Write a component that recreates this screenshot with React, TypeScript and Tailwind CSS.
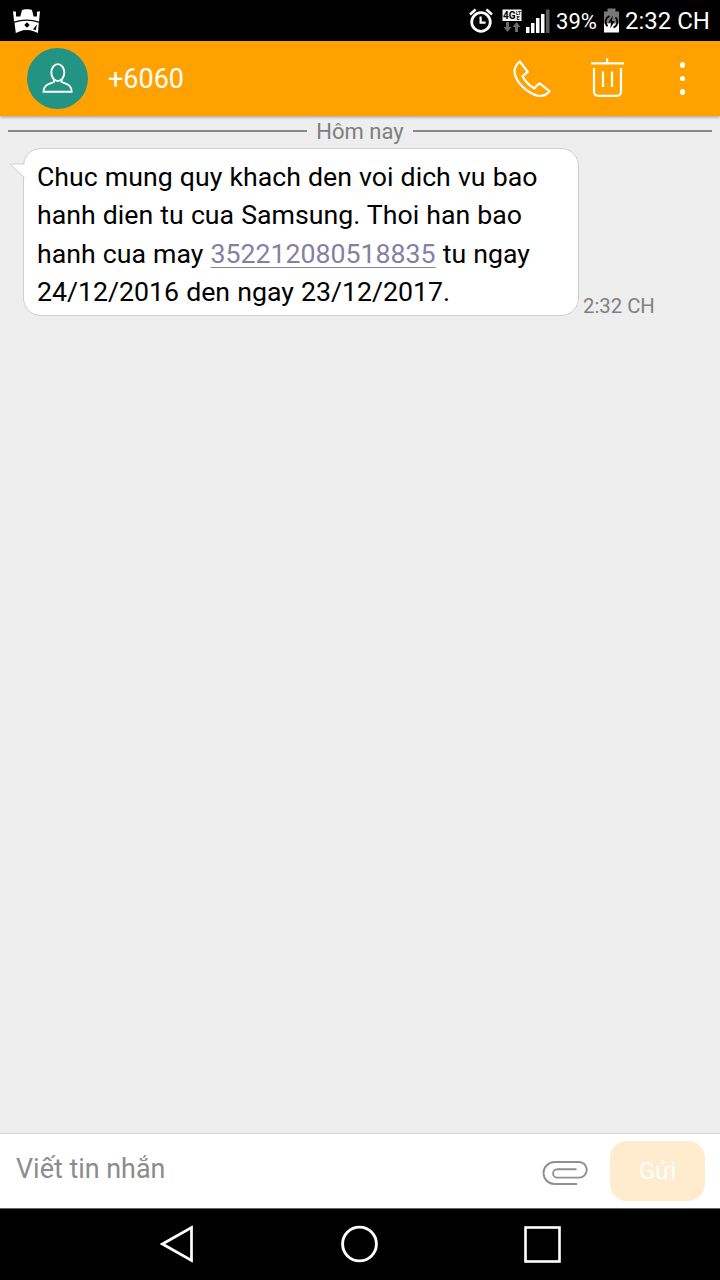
import React, { useState } from 'react';

const AlarmIcon = () => (
  <svg width="24" height="26" viewBox="0 0 24 26" fill="none" stroke="#fff">
    <circle cx="12" cy="14" r="9.3" strokeWidth="2.8" />
    <path d="M11.6 8.5v6.2h5" strokeWidth="2.2" />
    <path d="M1 6.4 6.6 1.6M23 6.4 17.4 1.6" strokeWidth="2.6" />
  </svg>
);

const NetworkIcon = () => (
  <svg width="20" height="24" viewBox="0 0 20 24">
    <rect x="0.5" y="0.5" width="19" height="11.5" fill="#f5f5f5" />
    <text x="1" y="10" fontSize="10.5" fontWeight="bold" textLength="12.5" lengthAdjust="spacingAndGlyphs" fontFamily="Roboto, sans-serif" fill="#000">4G</text>
    <text x="14" y="6" fontSize="5.5" fontWeight="bold" textLength="5" lengthAdjust="spacingAndGlyphs" fontFamily="Roboto, sans-serif" fill="#000">LT</text>
    <text x="14.5" y="10.8" fontSize="5.5" fontWeight="bold" fontFamily="Roboto, sans-serif" fill="#000">E</text>
    <path d="M4 13h3v5h2.5l-4 5-4-5H4zM13 23h3v-5h2.5l-4-5-4 5H13z" fill="#6b6b6b" />
  </svg>
);

const SignalIcon = () => (
  <svg width="24" height="24" viewBox="0 0 24 24" fill="#fff">
    <rect x="0" y="18" width="3.5" height="6" />
    <rect x="5" y="14" width="3.5" height="10" />
    <rect x="10" y="9" width="3.5" height="15" />
    <rect x="15" y="5" width="3.5" height="19" />
    <rect x="20" y="0.5" width="3.5" height="23.5" fill="#5c5c5c" />
  </svg>
);

const BatteryIcon = () => (
  <svg width="17" height="25" viewBox="0 0 17 25">
    <path d="M4.5 0.5h8v3H16v12.500H1V3.500h3.5z" fill="#787878" />
    <path d="M1 15.500h15v9H1z" fill="#fff" />
    <path d="M6.500 8A6.300 6.300 0 0 0 4.500 18.300M10.500 19.600A6.300 6.300 0 0 0 12.500 9.300" stroke="#000" strokeWidth="1.700" fill="none" />
    <path d="M9.800 7.500 5.200 14.600h3L7.200 20.500l4.600-7.400H8.900z" fill="#000" />
  </svg>
);

const CastleIcon = () => (
  <svg width="28" height="26" viewBox="0 0 28 26">
    <path d="M0 3.200 3 3.800V8.500H7.300L9 2 11 1.600 11.800 1.200h4.400l.8.400 2 .4L20.600 8.500h3.300V3.800L27 3.200 26 13.500Q13.500 9.500 1.100 13.500z" fill="#fff" />
    <path d="M1.500 14.800Q13.500 10.800 25.800 14.800L25 25 21.200 23.500Q13.500 20.600 6.500 23.500L2.800 25z" fill="#fff" />
    <path d="M14 14.300 16.700 17 14 19.700 11.300 17z" fill="#000" />
    <path d="M23.900 16.200 20 21.300 22.800 22.300z" fill="#000" />
  </svg>
);

const PersonIcon = () => (
  <svg width="32" height="32" viewBox="0 0 32 32" fill="none" stroke="#fff" strokeWidth="1.9">
    <ellipse cx="15.800" cy="9.600" rx="6.500" ry="8.500" />
    <path d="M12 17V19C7 21.300 1.500 21.500 1.500 28.700h28.200C29.700 21.500 24.500 21.300 19.600 19v-2" />
  </svg>
);

const PhoneIcon = () => (
  <svg width="38" height="38" viewBox="0 0 38 38" fill="none" stroke="#fff" strokeWidth="2.200" strokeLinejoin="round">
    <path d="M6.800 1.500 14.800 12Q12.500 13.500 9.500 16.300 13 23.500 21.300 28.400 23 26 26.500 23.300L36.500 31.200C33 35.600 29 36.700 24 35.600 13 32.500 3.500 22 1.700 13.500 1 8.500 3 4.500 6.800 1.500z" />
  </svg>
);

const TrashIcon = () => (
  <svg width="33" height="40" viewBox="0 0 33 40" fill="none" stroke="#fff" strokeWidth="2.200">
    <path d="M0 5.300h33M16.200 0.300v5" />
    <path d="M3 10v23.800a4 4 0 0 0 4 4h19a4 4 0 0 0 4-4V10" />
    <path d="M12 13.500v15.500M21 13.500v15.500" />
  </svg>
);

const ClipIcon = () => (
  <svg width="46" height="26" viewBox="0 0 46 26" fill="none" stroke="#909090" strokeWidth="1.900">
    <path d="M35 24H12.500a11 11 0 0 1 0-22H37a7.800 7.800 0 0 1 0 15.600H15.300a4.200 4.200 0 0 1 0-8.400H34.500" />
  </svg>
);

const StatusBar = () => (
  <div className="flex h-[41px] shrink-0 items-center bg-black pl-[13px] pr-[10px] text-white">
    <CastleIcon />
    <div className="ml-auto flex items-center">
      <AlarmIcon />
      <span className="ml-[9px]"><NetworkIcon /></span>
      <span className="ml-[4px]"><SignalIcon /></span>
      <span className="ml-[6px] w-[41px] whitespace-nowrap pt-[2px] text-[22px] leading-[39px]">39%</span>
      <span className="ml-[6px]"><BatteryIcon /></span>
      <span className="ml-[5px] pt-[2px] text-[24px] leading-[39px]">2:32 CH</span>
    </div>
  </div>
);

const Header = () => (
  <header className="z-10 flex h-[75px] shrink-0 items-center bg-[#ffa200] pl-[27px] pr-[35px] text-white shadow-[0_1px_3px_rgba(0,0,0,0.35)]">
    <div className="flex size-[61px] items-center justify-center rounded-full bg-[#239484]">
      <PersonIcon />
    </div>
    <h1 className="ml-[20px] pt-[2px] text-[27px]">+6060</h1>
    <button className="ml-auto"><PhoneIcon /></button>
    <button className="ml-[40px] pb-[1px]"><TrashIcon /></button>
    <button className="ml-[56px] flex flex-col gap-[8px]">
      <span className="size-[5.500px] rounded-full bg-white" />
      <span className="size-[5.500px] rounded-full bg-white" />
      <span className="size-[5.500px] rounded-full bg-white" />
    </button>
  </header>
);

const DateDivider = ({ label }: { label: string }) => (
  <div className="flex h-[32px] items-center gap-[9px] px-[8px] pb-[2px] text-[22px] text-[#7d807e]">
    <span className="h-[2px] flex-1 bg-[#868987]" />
    <span className="pt-[2px] leading-[30px]">{label}</span>
    <span className="h-[2px] flex-1 bg-[#868987]" />
  </div>
);

const Message = () => (
  <div className="flex items-end pl-[23px]">
    <div className="relative h-[168px] w-[556px] rounded-[18px] border border-[#cfcfcf] bg-white pl-[13px] pt-[9px] text-[26.700px] leading-[38.400px] text-black [word-spacing:0.5px]">
      <svg className="absolute -left-[15px] top-[14px]" width="16" height="16" viewBox="0 0 16 16">
        <path d="M15.500 1H1L15.500 14.500" fill="#fff" stroke="#cfcfcf" />
      </svg>
      <p className="whitespace-nowrap">
        Chuc mung quy khach den voi dich vu bao<br />
        hanh dien tu cua Samsung. Thoi han bao<br />
        hanh cua may <a className="text-[#8580a3] underline decoration-1 underline-offset-[4px]">352212080518835</a> tu ngay<br />
        24/12/2016 den ngay 23/12/2017.
      </p>
    </div>
    <time className="ml-[4px] text-[20.300px] leading-[20px] text-[#808080]">2:32 CH</time>
  </div>
);

const Composer = () => {
  const [text, setText] = useState('');

  return (
    <div className="flex h-[75px] shrink-0 items-center border-t border-[#d5d5d5] bg-white pl-[16px] pr-[15px]">
      <input
        value={text}
        onChange={e => setText(e.target.value)}
        placeholder="Viết tin nhắn"
        className="min-w-0 flex-1 pb-[4px] text-[26.900px] outline-none placeholder:text-[#8c8c8c]"
      />
      <button className="mr-[22px] pt-[3px]"><ClipIcon /></button>
      <button className="h-[60px] w-[95px] rounded-[17px] bg-[#ffebcd] text-[24px] text-white">Gửi</button>
    </div>
  );
};

const NavBar = () => (
  <nav className="flex h-[72px] shrink-0 items-center border-t border-[#666] bg-black pb-[1px] pl-[160px]">
    <svg width="34" height="38" viewBox="0 0 34 38" fill="none" stroke="#fff" strokeWidth="2.700">
      <path d="M31.500 2.500v33L2.500 19z" />
    </svg>
    <svg className="ml-[146px]" width="38" height="38" viewBox="0 0 38 38" fill="none" stroke="#fff" strokeWidth="2.900">
      <circle cx="19.500" cy="19" r="16.900" />
    </svg>
    <svg className="ml-[146px]" width="37" height="37" viewBox="0 0 37 37" fill="none" stroke="#fff" strokeWidth="2.600">
      <rect x="1.500" y="1.500" width="34" height="34" />
    </svg>
  </nav>
);

export default function App() {
  return (
    <div className="flex h-[1280px] w-[720px] flex-col overflow-hidden bg-[#eee] font-['Roboto',sans-serif]">
      <StatusBar />
      <Header />
      <main className="flex-1">
        <DateDivider label="Hôm nay" />
        <Message />
      </main>
      <Composer />
      <NavBar />
    </div>
  );
}
